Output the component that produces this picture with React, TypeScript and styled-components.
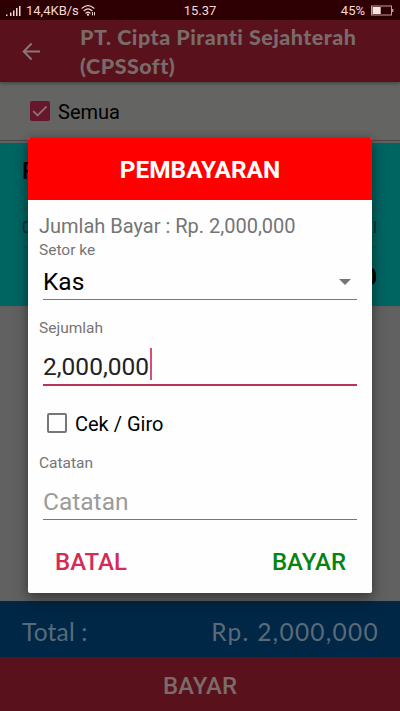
import React from "react";
import styled, { createGlobalStyle } from "styled-components";

const Global = createGlobalStyle`
  * { box-sizing: border-box; }
  body { margin: 0; overflow: hidden; font-family: Roboto, sans-serif; color: #000; }
  button { font: inherit; border: 0; padding: 0; background: none; cursor: pointer; }
`;

const Screen = styled.div`
  position: relative;
  width: 400px;
  height: 711px;
  overflow: hidden;
  display: flex;
  flex-direction: column;
  background: #616161;
`;

const StatusBar = styled.header`
  height: 20px;
  flex: none;
  display: grid;
  grid-template-columns: 1fr auto 1fr;
  align-items: center;
  padding: 1px 6px 0;
  background: #2e0003;
  color: #f3d9d5;
  font-size: 13px;
  line-height: 19px;
`;

const StatusGroup = styled.div<{ $end?: boolean }>`
  display: flex;
  align-items: center;
  justify-content: ${(p) => (p.$end ? "flex-end" : "flex-start")};
  gap: ${(p) => (p.$end ? "6px" : "2px")};
  svg { display: block; }
`;

const Speed = styled.span`
  margin-left: 3px;
`;

const AppBar = styled.div`
  height: 62px;
  flex: none;
  display: flex;
  align-items: center;
  padding-left: 20px;
  background: #59111c;
  box-shadow: 0 1px 4px rgba(0, 0, 0, 0.4);
  z-index: 1;
`;

const Title = styled.h1`
  margin: 2px 0 0 37px;
  font: 900 21.5px/29px Lato, sans-serif;
  letter-spacing: 0.48px;
  color: #796b6a;
  white-space: nowrap;
`;

const FilterRow = styled.label`
  height: 59px;
  flex: none;
  display: flex;
  align-items: center;
  gap: 8px;
  padding-left: 30px;
  border-bottom: 1px solid #484848;
  background: #646463;
  font-size: 20px;
`;

const FilterLabel = styled.span`
  padding-top: 2px;
`;

const Invoice = styled.section`
  height: 163px;
  margin-top: 2px;
  flex: none;
  padding: 14px 23px 0 22px;
  background: #006461;
`;

const InvoiceName = styled.div`
  font: 500 24px/28px Roboto, sans-serif;
`;

const InvoiceMeta = styled.div`
  display: flex;
  justify-content: space-between;
  margin-top: 23px;
  border-top: 1px dotted #164a49;
  border-bottom: 1px solid #0b5654;
  font-size: 16px;
  line-height: 38px;
  color: #12302f;
`;

const InvoiceAmount = styled.div`
  margin-top: 15px;
  font: 700 24px/28px Roboto, sans-serif;
  text-align: right;
`;

const TotalBar = styled.div`
  margin-top: auto;
  height: 56px;
  flex: none;
  display: flex;
  align-items: center;
  justify-content: space-between;
  padding: 6px 22px 0;
  background: #002746;
  color: #596b79;
  font: 400 24.5px/30px Lato, sans-serif;
  letter-spacing: 0.2px;
`;

const TotalAmount = styled.span`
  margin-right: -1px;
  letter-spacing: 1.25px;
`;

const PayBar = styled.button`
  && {
    height: 54px;
    padding-top: 3px;
    flex: none;
    background: #59111c;
    color: #7c6b6a;
    font: 500 24px/28px Roboto, sans-serif;
  }
`;

const Dialog = styled.div`
  position: absolute;
  z-index: 2;
  left: 28px;
  top: 138px;
  width: 344px;
  height: 455px;
  display: flex;
  flex-direction: column;
  overflow: hidden;
  border-radius: 2px;
  background: #fefefe;
  box-shadow: 0 8px 16px rgba(0, 0, 0, 0.32), 0 0 8px rgba(0, 0, 0, 0.2);
`;

const DialogHeader = styled.h2`
  height: 62px;
  flex: none;
  margin: 0;
  display: flex;
  align-items: center;
  justify-content: center;
  padding-top: 1px;
  background: #fe0000;
  color: #fff;
  font-size: 24.4px;
  font-weight: 700;
`;

const DialogBody = styled.div`
  display: flex;
  flex-direction: column;
  padding: 14px 15px 0 11px;
`;

const Summary = styled.div`
  font-size: 20px;
  line-height: 24px;
  color: #757575;
`;

const FieldLabel = styled.div<{ $top?: number }>`
  margin-top: ${(p) => p.$top ?? 0}px;
  font-size: 15.5px;
  line-height: 24px;
  color: #757575;
`;

const Field = styled.div<{ $height: number; $drop?: number; $active?: boolean; $muted?: boolean }>`
  height: ${(p) => p.$height}px;
  margin-left: 4px;
  padding-top: ${(p) => p.$drop ?? 0}px;
  display: flex;
  align-items: center;
  border-bottom: ${(p) => (p.$active ? "2px solid #bc3158" : "1px solid #777")};
  color: ${(p) => (p.$muted ? "#9b9b9b" : p.$active ? "#222" : "#000")};
  font-size: 24.5px;
`;

const Caret = styled.span`
  width: 2px;
  height: 32px;
  margin: -5px 0 0 1px;
  background: #d84d70;
`;

const Arrow = styled.svg`
  margin: 1px 6px 0 auto;
`;

const CheckRow = styled.label`
  display: flex;
  align-items: center;
  gap: 8px;
  height: 24px;
  margin: 25px 0 0 8px;
  font-size: 20px;
`;

const EmptyBox = styled.span`
  width: 20px;
  height: 20px;
  border: 2px solid #777;
  border-radius: 2px;
`;

const CheckText = styled.span`
  padding-top: 1px;
`;

const Actions = styled.div`
  display: flex;
  justify-content: space-between;
  margin: 28px 11px 0 16px;
`;

const Action = styled.button<{ $color: string }>`
  && {
    color: ${(p) => p.$color};
    font-size: 24px;
    font-weight: 500;
    line-height: 29px;
  }
`;

const SignalIcon = () => (
  <svg width="15" height="12" viewBox="0 0 15 12" fill="#f3d9d5">
    <path d="M0 9.5h1.5V11H0zM4 7.5h1.5V11H4zM7 5.5h1.5V11H7zM10 3h1.5v8H10zM13 1h1.5v10H13z" />
  </svg>
);

const WifiIcon = () => (
  <svg width="15" height="13" viewBox="0 0 15 13" fill="none" stroke="#f3d9d5" strokeWidth="1.2" strokeLinecap="round">
    <path d="M1 4.2Q7 -1 13 4.2M3 6.7Q7 3.2 11 6.7M5 9Q7 7.3 9 9" />
    <circle cx="7" cy="10.7" r=".5" fill="#f3d9d5" />
    <path d="M11.5 11V8.5M13.5 8.5V11" strokeWidth="1" />
  </svg>
);

const BatteryIcon = () => (
  <svg width="23" height="11" viewBox="0 0 23 11">
    <rect x=".5" y="1" width="20" height="9" fill="none" stroke="#c99d99" />
    <path d="M1.5 2h8.2v7H1.5z" fill="#f8e5df" />
    <path d="M21 4h1.3v3H21z" fill="#c99d99" />
  </svg>
);

const BackIcon = () => (
  <svg width="23" height="20" viewBox="0 0 23 20" fill="none" stroke="#887a79" strokeWidth="1.9">
    <path d="M20 10.5H4M11.6 2.5L3.7 10.5l7.9 8" />
  </svg>
);

const CheckedBox = () => (
  <svg width="20" height="20" viewBox="0 0 20 20">
    <rect width="20" height="20" rx="2" fill="#68162c" />
    <path d="M3.2 10.1l4.4 4.4 9-9.2" fill="none" stroke="#877376" strokeWidth="1.8" />
  </svg>
);

export default function App() {
  return (
    <>
      <Global />
      <Screen>
        <StatusBar>
          <StatusGroup>
            <SignalIcon />
            <Speed>14,4KB/s</Speed>
            <WifiIcon />
          </StatusGroup>
          <span>15.37</span>
          <StatusGroup $end>
            <span>45%</span>
            <BatteryIcon />
          </StatusGroup>
        </StatusBar>
        <AppBar>
          <BackIcon />
          <Title>PT. Cipta Piranti Sejahterah<br />(CPSSoft)</Title>
        </AppBar>
        <FilterRow><CheckedBox /><FilterLabel>Semua</FilterLabel></FilterRow>
        <Invoice>
          <InvoiceName>P</InvoiceName>
          <InvoiceMeta><span>0</span><span>l</span></InvoiceMeta>
          <InvoiceAmount>0</InvoiceAmount>
        </Invoice>
        <TotalBar><span>Total :</span><TotalAmount>Rp. 2,000,000</TotalAmount></TotalBar>
        <PayBar>BAYAR</PayBar>
        <Dialog role="dialog">
          <DialogHeader>PEMBAYARAN</DialogHeader>
          <DialogBody>
            <Summary>Jumlah Bayar : Rp. 2,000,000</Summary>
            <FieldLabel>Setor ke</FieldLabel>
            <Field $height={38} $drop={2}>
              Kas
              <Arrow width="12" height="6" viewBox="0 0 12 6"><path d="M0 0h12L6 6z" fill="#757575" /></Arrow>
            </Field>
            <FieldLabel $top={16}>Sejumlah</FieldLabel>
            <Field $height={46} $drop={8} $active>2,000,000<Caret /></Field>
            <CheckRow><EmptyBox /><CheckText>Cek / Giro</CheckText></CheckRow>
            <FieldLabel $top={16}>Catatan</FieldLabel>
            <Field $height={45} $drop={8} $muted>Catatan</Field>
            <Actions>
              <Action $color="#d62b55">BATAL</Action>
              <Action $color="#078312">BAYAR</Action>
            </Actions>
          </DialogBody>
        </Dialog>
      </Screen>
    </>
  );
}
